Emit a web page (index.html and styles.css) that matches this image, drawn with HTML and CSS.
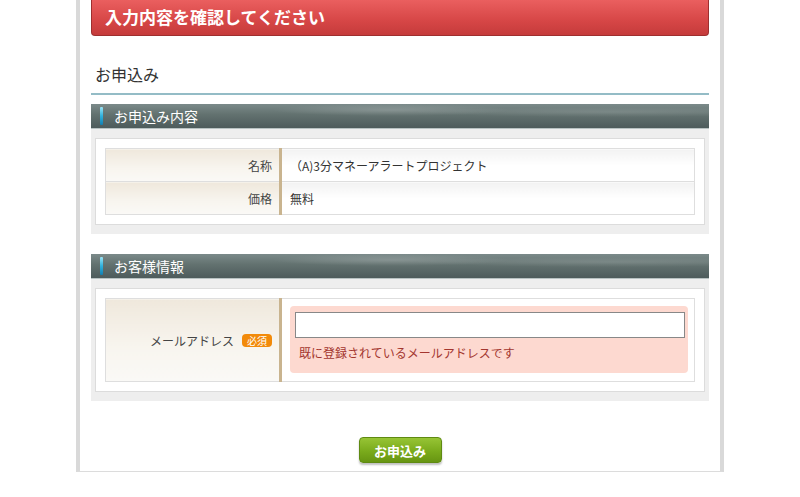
FILE: index.html
```html
<!DOCTYPE html>
<html lang="ja">
<head>
  <meta charset="UTF-8" />
  <title>お申込み</title>
  <link rel="stylesheet" href="styles.css">
</head>
<body>

<div class="page">
  <div class="alert-banner">入力内容を確認してください</div>

  <h2 class="page-title">お申込み</h2>

  <div class="section">
    <div class="section-head"><span class="section-mark"></span>お申込み内容</div>
    <div class="section-body">
      <div class="box">
        <table class="form-table">
          <tr>
            <th>名称</th>
            <td>（A)3分マネーアラートプロジェクト</td>
          </tr>
          <tr>
            <th>価格</th>
            <td>無料</td>
          </tr>
        </table>
      </div>
    </div>
  </div>

  <div class="section">
    <div class="section-head"><span class="section-mark"></span>お客様情報</div>
    <div class="section-body">
      <div class="box">
        <table class="form-table">
          <tr class="tall-row">
            <th>メールアドレス<span class="badge">必須</span></th>
            <td>
              <div class="error-field">
                <input type="text" class="text-input">
                <p class="error-text">既に登録されているメールアドレスです</p>
              </div>
            </td>
          </tr>
        </table>
      </div>
    </div>
  </div>

  <div class="actions">
    <button class="submit-btn">お申込み</button>
  </div>
</div>

</body>
</html>
```

FILE: styles.css
```css
body {
  margin: 0;
  background: #fff;
  font-family: "Noto Sans CJK JP", "Noto Sans", sans-serif;
  color: #333;
}

.page {
  width: 648px;
  margin: 0 auto;
  box-sizing: border-box;
  border-left: 4px solid #d9d9d9;
  border-right: 4px solid #d9d9d9;
  border-bottom: 1px solid #dcdcdc;
  padding: 0 11px 8px;
  background: #fff;
}

.alert-banner {
  height: 36px;
  box-sizing: border-box;
  padding-left: 13px;
  line-height: 34px;
  font-size: 17px;
  font-weight: bold;
  color: #fff;
  background: linear-gradient(to bottom, #ea5f5f, #d64646 60%, #c53b3b);
  border: 1px solid #9e2f2f;
  border-top: none;
  border-radius: 0 0 4px 4px;
}

.page-title {
  margin: 26px 0 9px;
  padding: 0 0 7px 4px;
  font-size: 16px;
  font-weight: normal;
  line-height: 24px;
  border-bottom: 2px solid #94bcc6;
}

.section {
  margin-bottom: 20px;
}

.section-head {
  height: 24px;
  display: flex;
  align-items: center;
  gap: 11px;
  padding-left: 9px;
  font-size: 14px;
  color: #fff;
  background:
    radial-gradient(ellipse 120px 6px at 300px 6px, rgba(255,255,255,0.18), transparent),
    radial-gradient(ellipse 200px 5px at 520px 8px, rgba(255,255,255,0.12), transparent),
    linear-gradient(to bottom, #7b8a8a 0%, #62716f 45%, #4d5b5b 100%);
  border-bottom: 1px solid #b8c2c2;
}

.section-mark {
  width: 3px;
  height: 18px;
  border-radius: 1px;
  background: linear-gradient(to bottom, #9be4f6, #2fb1dc 50%, #137fb0);
}

.section-body {
  background: #eeeeee;
  padding: 9px 4px;
}

.box {
  background: #fff;
  border: 1px solid #dcdcdc;
  padding: 9px;
}

.form-table {
  width: 100%;
  border-collapse: collapse;
  font-size: 12px;
}

.form-table th {
  width: 175px;
  height: 33px;
  box-sizing: border-box;
  padding: 0 7px 0 0;
  text-align: right;
  font-weight: normal;
  color: #444;
  background: linear-gradient(to bottom, #efe8dc, #f8f5ef 60%, #faf9f6);
  border: 1px solid #dedede;
  border-right: 3px solid #c9b48f;
}

.form-table td {
  padding: 0 8px;
  color: #333;
  background: linear-gradient(to bottom, #f2f2f2, #fff 50%);
  border: 1px solid #dedede;
}

.tall-row th {
  height: 82px;
}

.tall-row td {
  padding: 7px 6px 8px 8px;
  background: #fff;
}

.badge {
  display: inline-block;
  margin-left: 8px;
  padding: 0 5px;
  height: 13px;
  line-height: 13px;
  font-size: 10px;
  color: #fff;
  background: #f28a0a;
  border-radius: 4px;
  vertical-align: 1px;
}

.error-field {
  background: #fdd9d0;
  border-radius: 4px;
  padding: 6px 3px 11px 5px;
}

.text-input {
  display: block;
  width: 100%;
  height: 26px;
  box-sizing: border-box;
  margin: 0;
  border: 1px solid #888;
  background: #fff;
}

.error-text {
  margin: 6px 0 0 4px;
  font-size: 12px;
  line-height: 18px;
  color: #a3362f;
}

.actions {
  display: flex;
  justify-content: center;
  padding-top: 16px;
}

.submit-btn {
  width: 83px;
  height: 26px;
  font-family: inherit;
  font-size: 13px;
  font-weight: bold;
  color: #fff;
  background: linear-gradient(to bottom, #97c435, #7aab1c 55%, #679512);
  border: 1px solid #5f8a12;
  border-radius: 4px;
  box-shadow: 0 2px 2px rgba(0,0,0,0.25);
  cursor: pointer;
}
```
